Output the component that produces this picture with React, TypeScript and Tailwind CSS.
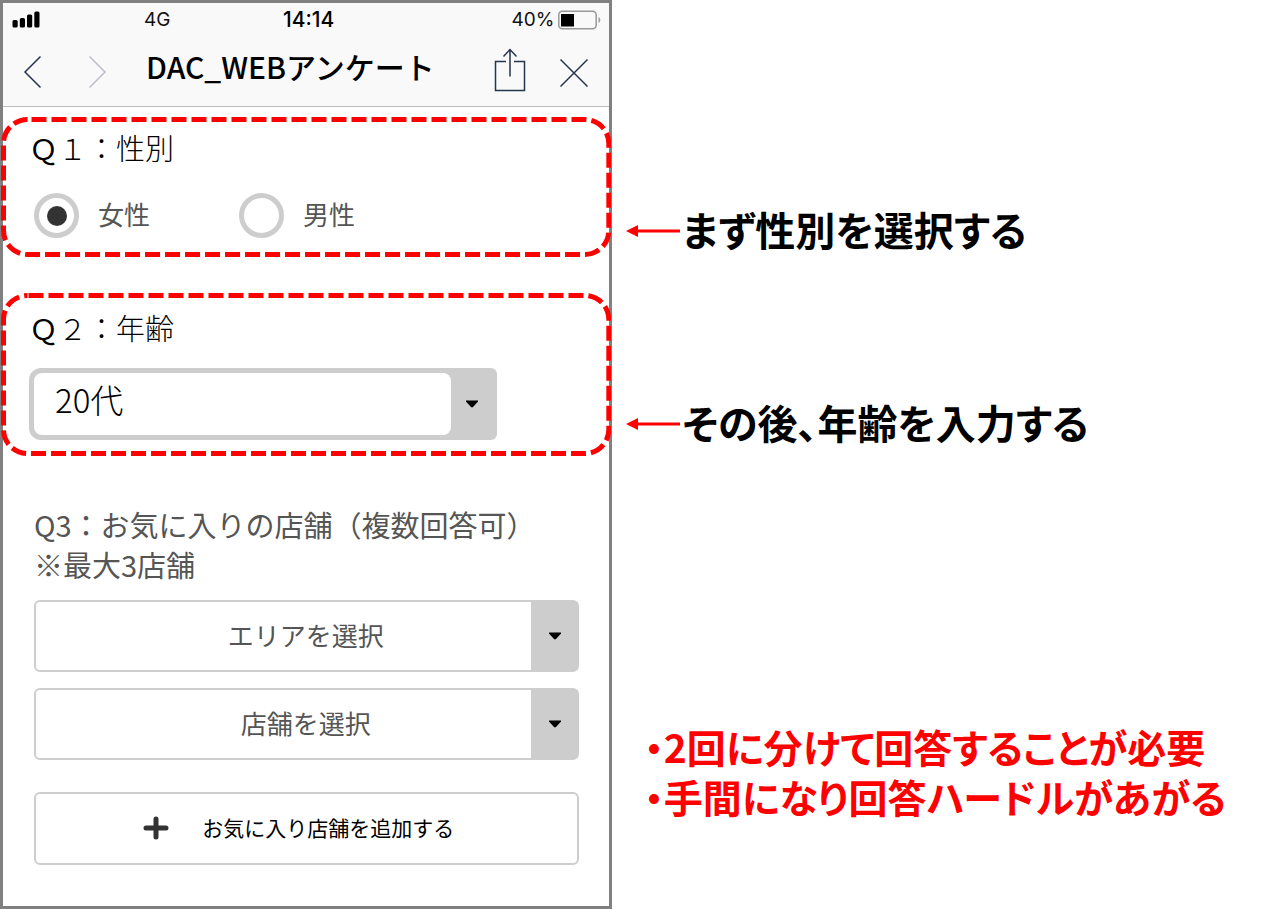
import { useState } from 'react';
import type { ReactNode } from 'react';

const ages = ['10代', '20代', '30代', '40代', '50代'];
const genders = ['女性', '男性'];

function Caret() {
  return (
    <svg width="12" height="8" viewBox="0 0 12 8" className="ml-0.5" aria-hidden="true">
      <path d="M0 0.5h12v1L6.8 7.2H5.2L0 1.5z" fill="#000" />
    </svg>
  );
}

function StatusBar() {
  return (
    <div className="grid h-[34px] grid-cols-3 items-center pl-[9px] pr-2 text-[19px] text-[#111]">
      <div className="flex items-center">
        <svg width="28" height="17" viewBox="0 0 28 17" className="mb-px" aria-hidden="true">
          <rect x="0.5" y="9" width="5.2" height="7.5" rx="1.5" />
          <rect x="7.8" y="7" width="5.2" height="9.5" rx="1.5" />
          <rect x="15" y="3.5" width="5.2" height="13" rx="1.5" />
          <rect x="22.3" y="0.5" width="5.2" height="16" rx="1.5" />
        </svg>
        <span className="ml-[104px]">4G</span>
      </div>
      <span className="pl-1 text-center text-[21px] font-medium text-black">14:14</span>
      <div className="flex items-center justify-end">
        <span>40%</span>
        <svg width="43" height="20" viewBox="0 0 43 20" className="ml-1" aria-hidden="true">
          <rect x="0.8" y="1.3" width="37.4" height="17.4" rx="3.5" fill="none" stroke="#999" strokeWidth="1.5" />
          <rect x="3" y="4" width="13" height="12.5" fill="#000" />
          <path d="M40.5 7v6c1-.6 1.8-1.6 1.8-3s-.8-2.4-1.8-3z" fill="#999" />
        </svg>
      </div>
    </div>
  );
}

function NavBar() {
  return (
    <div className="flex h-[69px] items-center pl-5 pr-5">
      <button type="button" aria-label="戻る">
        <svg width="20" height="34" viewBox="0 0 20 34" fill="none" stroke="#26344f" strokeWidth="1.5">
          <path d="M17.5 1.5L2 17l15.5 15.5" />
        </svg>
      </button>
      <button type="button" aria-label="進む" className="ml-11">
        <svg width="20" height="34" viewBox="0 0 20 34" fill="none" stroke="#bcbfc9" strokeWidth="1.5">
          <path d="M2.5 1.5L18 17 2.5 32.5" />
        </svg>
      </button>
      <h1 className="ml-[39px] flex-1 whitespace-nowrap pb-3 text-[30px] font-medium leading-10 text-black">
        DAC_WEBアンケート
      </h1>
      <button type="button" aria-label="共有" className="pb-1">
        <svg width="32" height="44" viewBox="0 0 32 44" fill="none" stroke="#26344f" strokeWidth="1.5">
          <path d="M12 13.5H1.5v29h29v-29H20" />
          <path d="M16 28.5V1.5M9.5 8.5L16 1.5l6.5 7" />
        </svg>
      </button>
      <button type="button" aria-label="閉じる" className="ml-[33px] pt-0.5">
        <svg width="30" height="30" viewBox="0 0 30 30" fill="none" stroke="#26344f" strokeWidth="1.5">
          <path d="M1.5 1.5l27 27M28.5 1.5l-27 27" />
        </svg>
      </button>
    </div>
  );
}

// Section outlined with the red dashed marker
function Highlight({ className, offset, children }: { className: string; offset: number; children: ReactNode }) {
  return (
    <section className={`relative -mx-0.5 pl-7 pr-8 ${className}`}>
      <svg className="pointer-events-none absolute inset-0 h-full w-full" aria-hidden="true">
        <rect
          x="2.5"
          y="2.5"
          rx="24"
          className="h-[calc(100%-5px)] w-[calc(100%-5px)]"
          fill="none"
          stroke="#f00"
          strokeWidth="5"
          strokeDasharray="15 5"
          strokeDashoffset={offset}
        />
      </svg>
      {children}
    </section>
  );
}

function PlainSelect({ label, className }: { label: string; className: string }) {
  return (
    <div className={`flex h-[72px] overflow-hidden rounded-md border-2 border-[#cdcdcd] bg-[#cdcdcd] ${className}`}>
      <select
        aria-label={label}
        className="min-w-0 flex-1 appearance-none bg-white pb-1 pl-11 text-center text-[26px] text-[#555]"
      >
        <option>{label}</option>
      </select>
      <span className="flex w-[46px] items-center justify-center">
        <Caret />
      </span>
    </div>
  );
}

function Note({ className, children }: { className?: string; children: ReactNode }) {
  return (
    <p className={`flex items-center whitespace-nowrap text-[40px] font-bold leading-[50px] text-black ${className ?? ''}`}>
      <svg width="54" height="12" viewBox="0 0 54 12" className="mr-0.5 shrink-0" aria-hidden="true">
        <path d="M0 6L12 0v4.500h42v3H12V12z" fill="#f00" />
      </svg>
      <span className="pb-1">{children}</span>
    </p>
  );
}

export default function App() {
  const [gender, setGender] = useState('女性');
  const [age, setAge] = useState('20代');

  return (
    <div className="flex min-h-screen bg-white font-['Noto_Sans_CJK_JP',sans-serif]">
      <main className="w-[48.1%] shrink-0 border-[3px] border-[#808080] bg-white">
        <header className="border-b border-[#bbb] bg-[#f9f9f9]">
          <div className="font-['Inter',sans-serif]">
            <StatusBar />
          </div>
          <NavBar />
        </header>

        <Highlight className="mt-2.5 pb-[19px] pt-2.5" offset={-4}>
          <h2 className="text-[29px] font-light leading-10 text-black">
            <span className="font-normal">Ｑ</span>１：性別
          </h2>
          <div className="mt-[26px] flex pl-[5px]">
            {genders.map((g) => (
              <label key={g} className="flex w-[205px] items-center gap-[19px] text-[26px] text-[#555]">
                <input
                  type="radio"
                  name="gender"
                  value={g}
                  checked={gender === g}
                  onChange={() => setGender(g)}
                  className="grid size-[45px] appearance-none place-items-center rounded-full border-[5px] border-[#cdcdcd] bg-white before:size-5 before:rounded-full checked:before:bg-[#333]"
                />
                <span className="pb-1 leading-10">{g}</span>
              </label>
            ))}
          </div>
        </Highlight>

        <Highlight className="mt-9 pb-4 pt-3.5" offset={-1}>
          <h2 className="text-[29px] font-light leading-10 text-black">
            <span className="font-normal">Ｑ</span>２：年齢
          </h2>
          <div className="mt-[21px] flex h-[72px] w-[85%] rounded-l-xl rounded-r-md bg-[#cdcdcd] p-[5px]">
            <select
              aria-label="年齢"
              value={age}
              onChange={(e) => setAge(e.target.value)}
              className="min-w-0 flex-1 appearance-none rounded-lg bg-white pb-2 pl-[21px] text-[33px] font-light text-black"
            >
              {ages.map((a) => (
                <option key={a}>{a}</option>
              ))}
            </select>
            <span className="flex w-[41px] items-center justify-center">
              <Caret />
            </span>
          </div>
        </Highlight>

        <section className="mt-12 pl-[31px] pr-[30px]">
          <h2 className="whitespace-nowrap text-[29px] leading-10 text-[#555]">
            Q3：お気に入りの店舗（複数回答可）
            <br />
            ※最大3店舗
          </h2>
          <PlainSelect label="エリアを選択" className="mt-4" />
          <PlainSelect label="店舗を選択" className="mt-4" />
          <button
            type="button"
            className="mt-8 flex h-[73px] w-full items-center justify-center gap-[33px] rounded-md border-2 border-[#cdcdcd] bg-white pb-0.5 pr-4 text-[21px] text-black"
          >
            <svg width="26" height="24" viewBox="0 0 26 24" stroke="#333" strokeWidth="5" strokeLinecap="round" aria-hidden="true">
              <path d="M3 12h20M13 3v18" />
            </svg>
            お気に入り店舗を追加する
          </button>
        </section>
      </main>

      <aside className="flex-1 pl-3.5 pt-[204px] [font-feature-settings:'palt']">
        <Note>まず性別を選択する</Note>
        <Note className="mt-[139px]">その後、年齢を入力する</Note>
        <p className="mt-[270px] whitespace-nowrap pl-[18px] text-[39px] font-bold leading-[50px] text-[#f00]">
          ・2回に分けて回答することが必要
          <br />
          ・手間になり回答ハードルがあがる
        </p>
      </aside>
    </div>
  );
}
